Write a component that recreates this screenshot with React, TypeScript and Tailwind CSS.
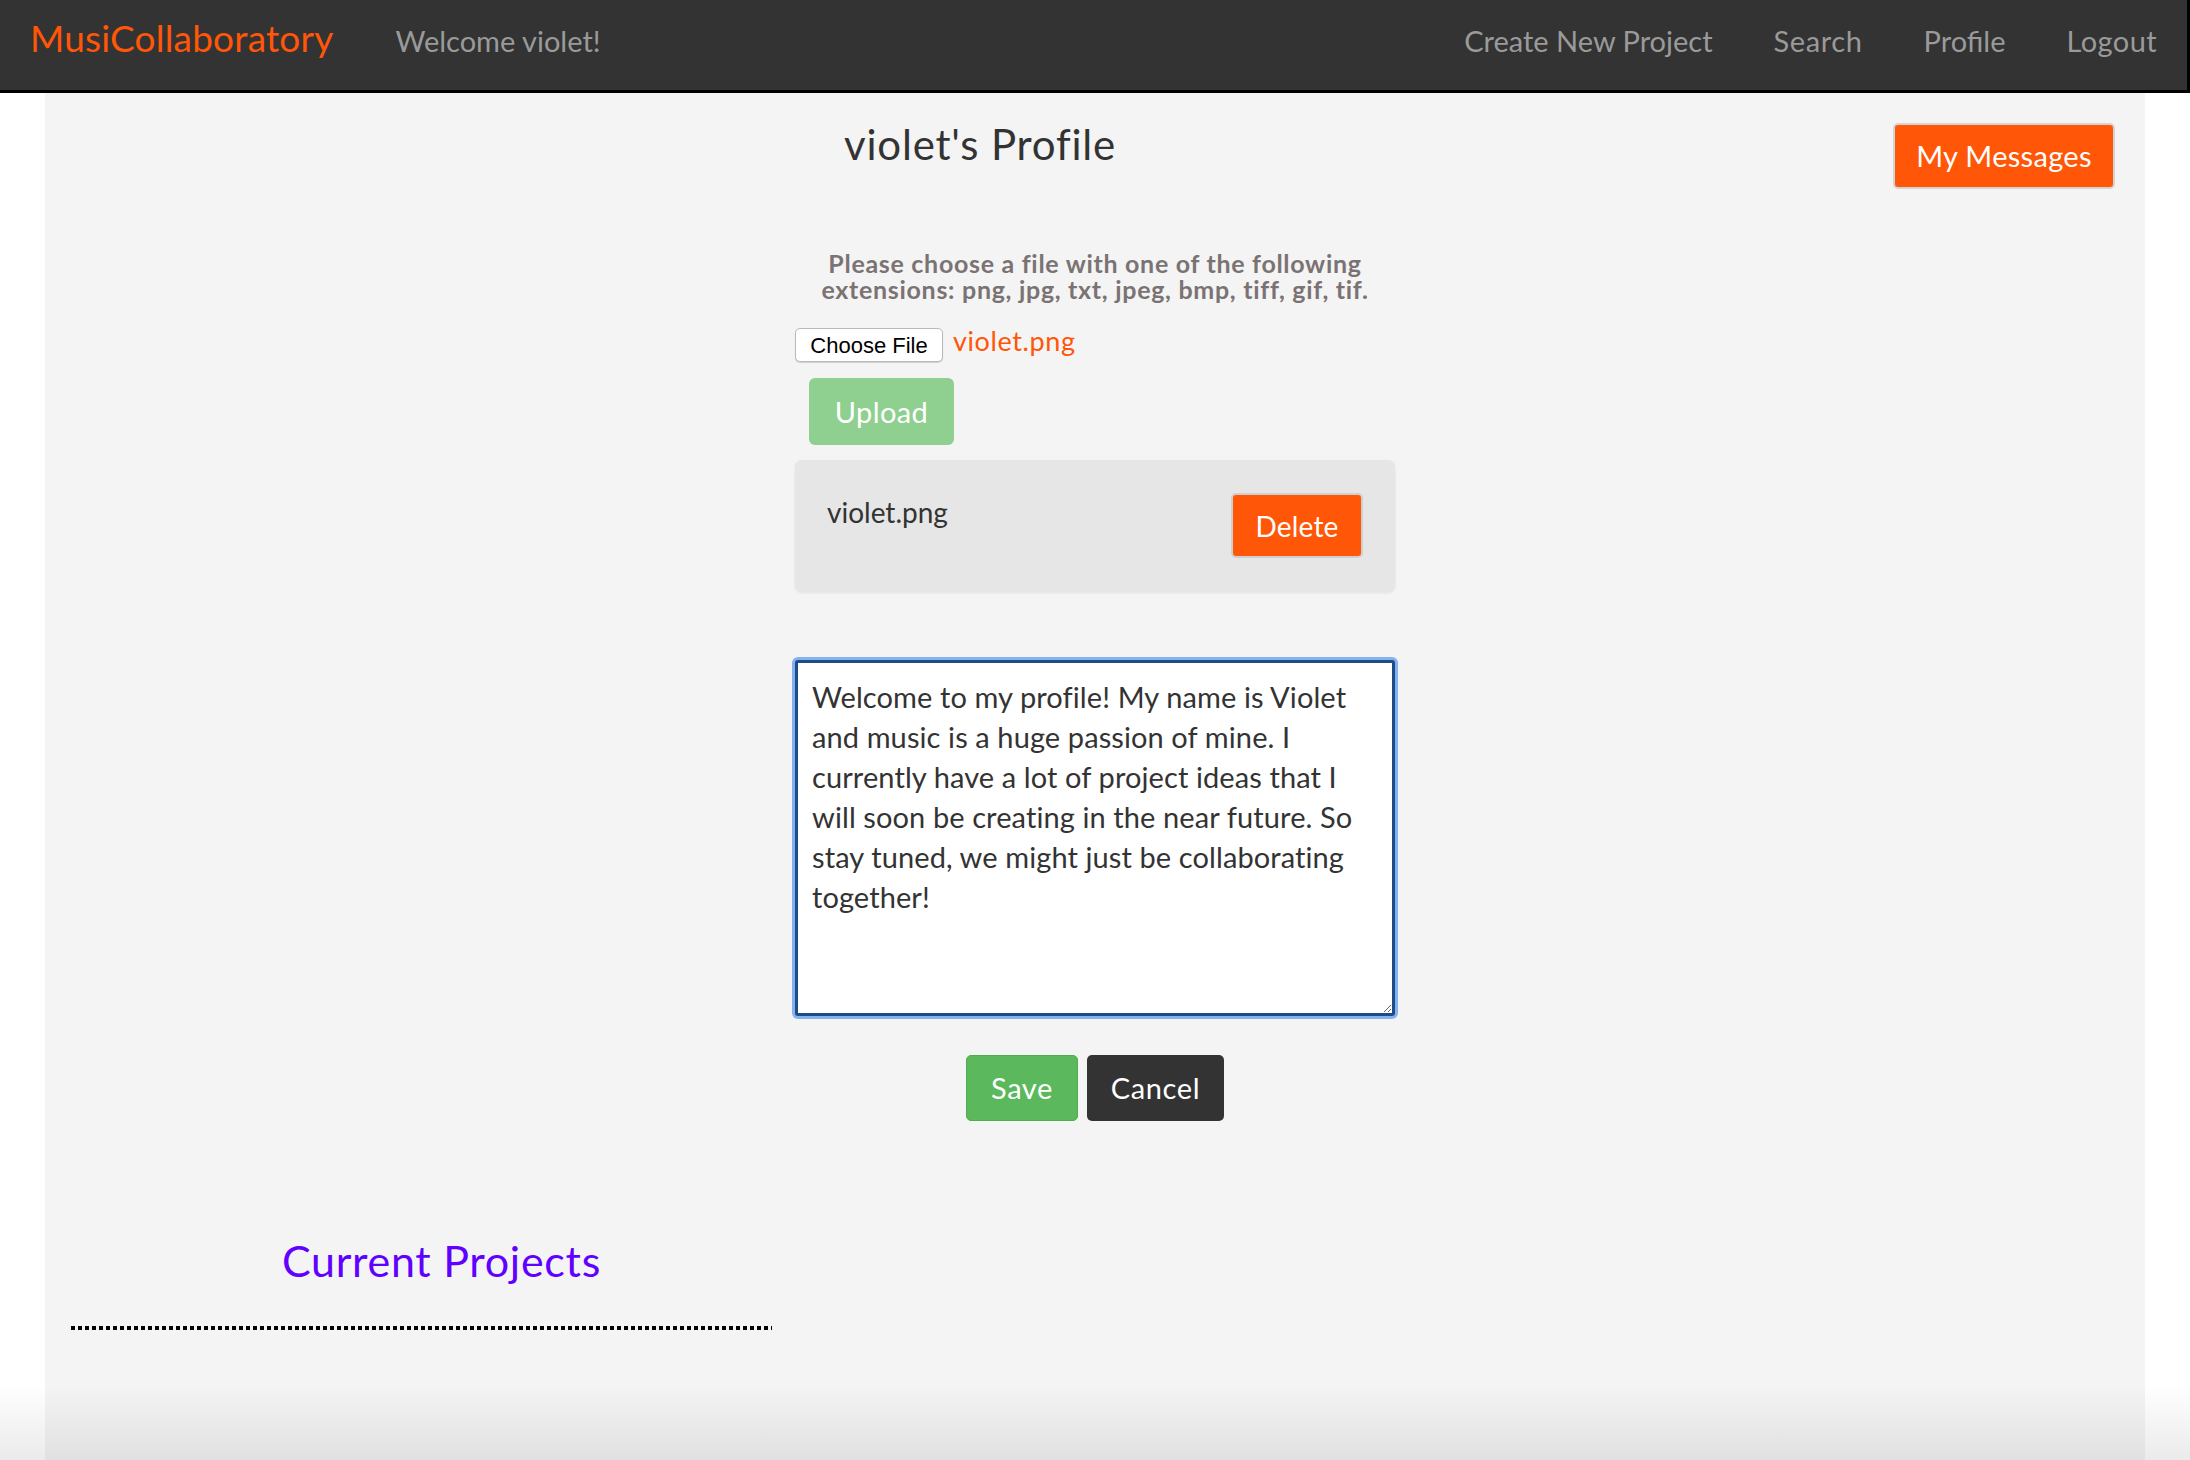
export default function App() {
  const bio =
    "Welcome to my profile! My name is Violet\nand music is a huge passion of mine. I\ncurrently have a lot of project ideas that I\nwill soon be creating in the near future. So\nstay tuned, we might just be collaborating\ntogether!";
  return (
    <div className="relative min-h-[1460px] w-full overflow-hidden bg-white font-[Lato,sans-serif]">
      <nav className="flex h-[93px] items-baseline border-b-[3px] border-r-[3px] border-black bg-[#333333] pl-[30px] pr-[30px] pt-[16px]">
        <span className="text-[37px] leading-[1.2] tracking-[0.2px] text-[#ff5607]">MusiCollaboratory</span>
        <span className="ml-[62px] text-[29px] leading-[1.2] text-[#9a9a9a]">Welcome violet!</span>
        <div className="ml-auto flex items-baseline gap-[61px] text-[29px] leading-[1.2] text-[#9a9a9a]">
          <span className="tracking-[0px]">Create New Project</span>
          <span className="tracking-[0.6px]">Search</span>
          <span>Profile</span>
          <span className="tracking-[0.4px]">Logout</span>
        </div>
      </nav>

      <main className="mx-[45px] flex min-h-[1367px] flex-col bg-[#f4f4f4]">
        <div className="flex items-start">
          <h1 className="ml-[799px] mt-[26px] text-[42px] leading-[1.2] tracking-[0.8px] text-[#333333]">violet&apos;s Profile</h1>
          <button className="ml-auto mr-[30px] mt-[30px] h-[66px] w-[222px] rounded-[5px] border-2 border-[#d4d4d4] bg-[#ff5607] text-[29px] tracking-[0.3px] text-white">
            My Messages
          </button>
        </div>

        <div className="mx-auto flex w-[600px] flex-col">
          <p className="mt-[61px] whitespace-nowrap text-center text-[25px] font-bold leading-[26px] tracking-[0.7px] text-[#7b7373]">
            Please choose a file with one of the following
            <br />
            extensions: png, jpg, txt, jpeg, bmp, tiff, gif, tif.
          </p>

          <div className="mt-[26px] flex items-center">
            <button className="h-[34px] w-[148px] rounded-[5px] border border-[#b9b9b9] bg-white font-['Liberation_Sans',Arial,sans-serif] text-[22px] text-black shadow-[0_1px_1px_rgba(0,0,0,0.15)]">
              Choose File
            </button>
            <span className="-mt-[8px] ml-[10px] text-[27px] leading-[1.2] tracking-[0.6px] text-[#ff5607]">violet.png</span>
          </div>

          <button className="ml-[14px] mt-[16px] h-[67px] w-[145px] rounded-[6px] bg-[#8fcf8f] text-[29px] tracking-[0.4px] text-white">
            Upload
          </button>

          <div className="mt-[15px] flex h-[132px] items-start justify-between rounded-[7px] bg-[#e6e6e6] px-[32px] pt-[33px] shadow-[0_1px_3px_rgba(0,0,0,0.08)]">
            <span className="mt-[3px] text-[28px] leading-[1.2] text-[#333333]">violet.png</span>
            <button className="h-[65px] w-[132px] rounded-[5px] border-2 border-[#cfcfcf] bg-[#ff5607] text-[28px] tracking-[0.2px] text-white">
              Delete
            </button>
          </div>

          <textarea
            readOnly
            defaultValue={bio}
            wrap="off"
            className="mt-[68px] h-[356px] w-[600px] overflow-hidden whitespace-pre rounded-[3px] border-[3px] border-[#1d4c86] bg-white p-[14px] text-[29px] leading-[40px] tracking-[0.1px] text-[#333333] shadow-[0_0_0_3px_#82b2f0] outline-none"
          />

          <div className="mt-[39px] flex justify-center gap-[9px]">
            <button className="h-[66px] w-[112px] rounded-[5px] border border-[#4cae4c] bg-[#5cb85c] text-[29px] tracking-[0.6px] text-white">
              Save
            </button>
            <button className="h-[66px] w-[137px] rounded-[5px] bg-[#333333] text-[29px] tracking-[0.6px] text-white">
              Cancel
            </button>
          </div>
        </div>

        <section className="mt-[114px] flex flex-col">
          <h2 className="ml-[237px] text-[43px] leading-[1.2] tracking-[0.7px] text-[#6200ff]">Current Projects</h2>
          <div className="ml-[26px] mt-[39px] h-[4px] w-[701px] bg-[repeating-linear-gradient(90deg,#000_0px,#000_4px,transparent_4px,transparent_7px)]" />
        </section>
      </main>

      <div className="pointer-events-none absolute bottom-0 left-0 right-0 h-[75px] bg-gradient-to-b from-transparent to-black/[0.08]" />
    </div>
  );
}
